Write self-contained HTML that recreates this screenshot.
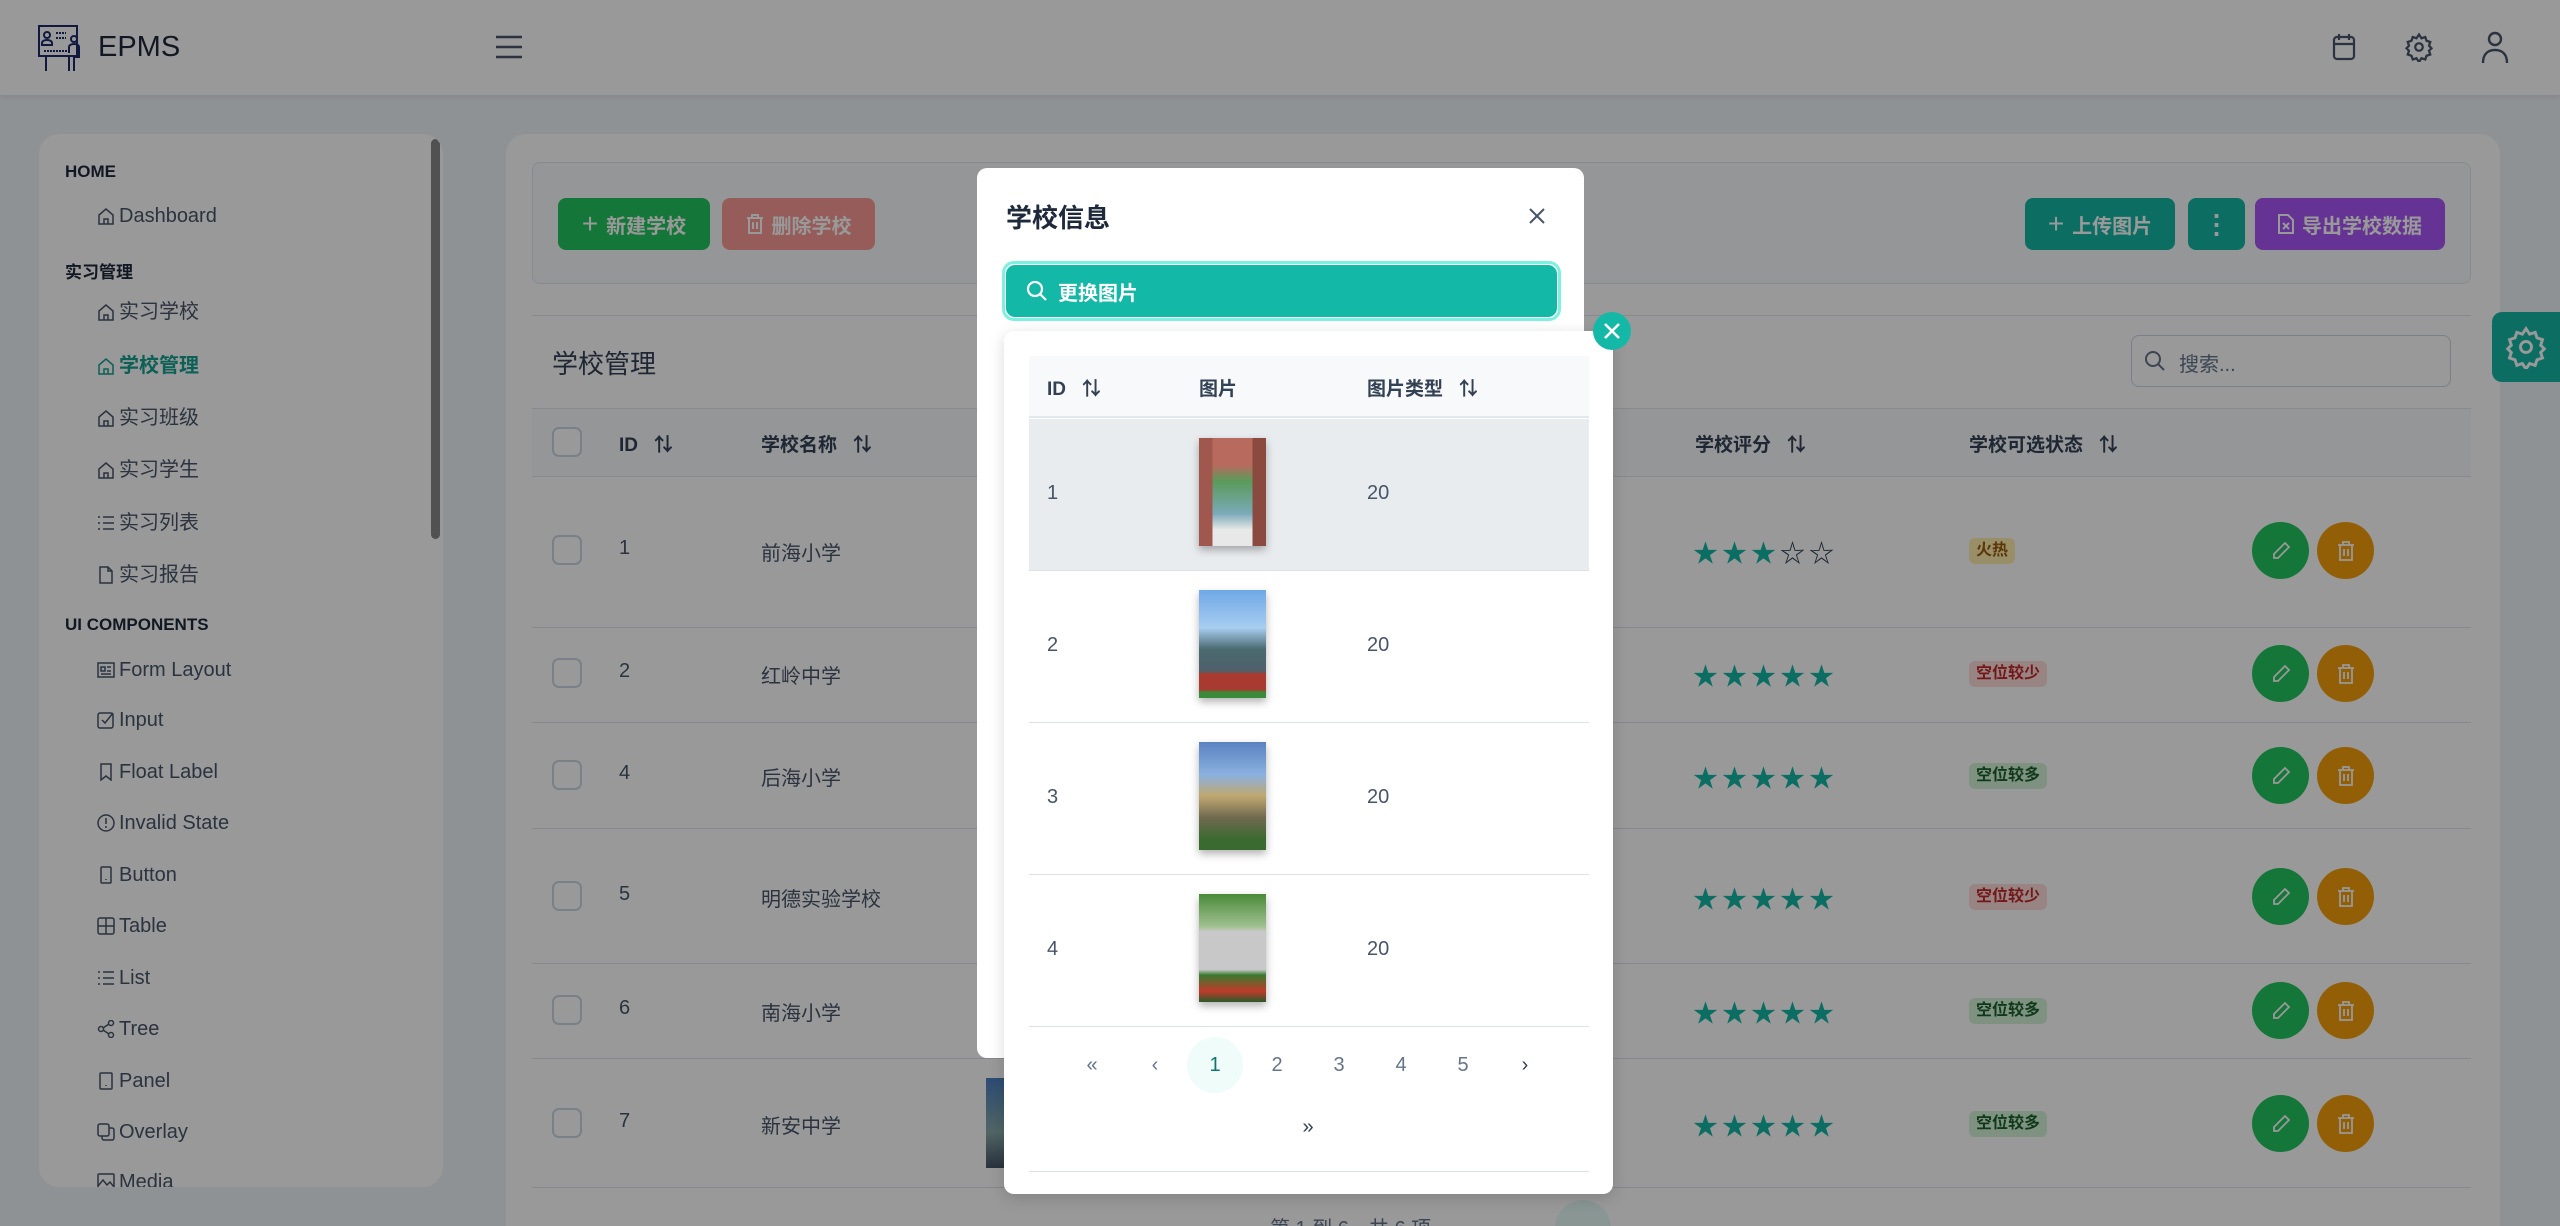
<!DOCTYPE html>
<html><head><meta charset="utf-8">
<style>
*{box-sizing:border-box;margin:0;padding:0}
html,body{width:2560px;height:1226px;overflow:hidden}
body{background:#eff3f8;font-family:"Liberation Sans","Noto Sans CJK SC",sans-serif;color:#334155;position:relative}
.a{position:absolute}
.hdr{left:0;top:0;width:2560px;height:95px;background:#fff;box-shadow:0 2px 6px rgba(0,0,0,.08)}
.side{left:39px;top:134px;width:404px;height:1053px;background:#fff;border-radius:20px;overflow:hidden}
.sec{font-size:17px;font-weight:bold;color:#1e293b;left:26px}
.it{font-size:20px;color:#475569;left:80px;line-height:24px}
.ic{left:-22px;top:3px;width:18px;height:18px}
.card{left:506px;top:134px;width:1994px;height:1092px;background:#fff;border-radius:20px 20px 0 0}
.btn{height:52px;border-radius:8px;color:#fff;font-size:20px;font-weight:bold;display:flex;align-items:center;justify-content:center;gap:8px}
.th{font-size:19px;font-weight:bold;color:#334155}
.td{font-size:20px;color:#475569}
.line{height:1px;background:#dee2e6}
.cb{width:30px;height:30px;border:2px solid #cbd5e1;border-radius:7px;background:#fff}
.tag{height:26px;padding:0 7px;border-radius:6px;font-size:16px;font-weight:bold;line-height:26px}
.rb{width:57px;height:57px;border-radius:50%;display:flex;align-items:center;justify-content:center}
.ov{left:0;top:0;width:2560px;height:1226px;background:rgba(0,0,0,.4);z-index:10}
.dlg{left:977px;top:168px;width:607px;height:890px;background:#fff;border-radius:10px;z-index:20}
.pop{left:1004px;top:331px;width:609px;height:863px;background:#fff;border-radius:10px;z-index:30;box-shadow:0 4px 16px rgba(0,0,0,.15)}
.img{width:67px;height:108px;box-shadow:0 4px 8px rgba(0,0,0,.3)}
.pg{font-size:20px;color:#64748b;width:56px;height:56px;line-height:56px;text-align:center;border-radius:50%}
.st{font-size:25px;color:#14b8a6;letter-spacing:4px;left:1693px}
</style></head><body>

<div class="a hdr">
  <svg class="a" style="left:36px;top:23px" width="50" height="50" viewBox="0 0 50 50" fill="none" stroke="#1e2a6b" stroke-width="2"><rect x="3" y="3" width="38" height="30"/><circle cx="11" cy="12" r="3"/><path d="M6 20c0-4 10-4 10 0v2H6z"/><path d="M20 10h10M20 15h10M8 28h24" stroke-dasharray="2 1"/><circle cx="38" cy="16" r="3"/><path d="M33 30v-6c0-4 10-4 10 0v10H38v14M33 32v16M10 33v15M38 33v15"/></svg>
  <div class="a" style="left:98px;top:31px;font-size:29px;color:#1e293b">EPMS</div>
  <svg class="a" style="left:494px;top:34px" width="30" height="26" viewBox="0 0 30 26" stroke="#475569" stroke-width="2.6"><path d="M2 3h26M2 13h26M2 23h26"/></svg>
  <svg class="a" style="left:2330px;top:32px" width="28" height="30" viewBox="0 0 28 30" fill="none" stroke="#475569" stroke-width="2.2"><rect x="4" y="5" width="20" height="22" rx="3"/><path d="M9 2v6M19 2v6M4 12h20"/></svg>
  <svg class="a" style="left:2404px;top:32px" width="30" height="30" viewBox="0 0 24 24" fill="none" stroke="#475569" stroke-width="1.8"><circle cx="12" cy="12" r="3"/><path d="M12 2l2 3 3-1 1 3 3 1-1 3 2 2-2 2 1 3-3 1-1 3-3-1-2 3-2-3-3 1-1-3-3-1 1-3-2-2 2-2-1-3 3-1 1-3 3 1z"/></svg>
  <svg class="a" style="left:2480px;top:30px" width="30" height="34" viewBox="0 0 30 34" fill="none" stroke="#475569" stroke-width="2.4"><circle cx="15" cy="9" r="6"/><path d="M3 33c0-9 5-13 12-13s12 4 12 13"/></svg>
</div>

<div class="a side">
  <div class="a" style="left:392px;top:5px;width:9px;height:400px;background:#888;border-radius:5px"></div>
  <div class="a sec" style="top:28px">HOME</div>
  <div class="a it" style="top:70px"><svg class="a ic" viewBox="0 0 18 18" fill="none" stroke="#475569" stroke-width="1.5"><path d="M2 8L9 2l7 6v9H2zM7 17v-5h4v5"/></svg>Dashboard</div>
  <div class="a sec" style="top:124px">实习管理</div>
  <div class="a it" style="top:166px"><svg class="a ic" viewBox="0 0 18 18" fill="none" stroke="#475569" stroke-width="1.5"><path d="M2 8L9 2l7 6v9H2zM7 17v-5h4v5"/></svg>实习学校</div>
  <div class="a it" style="top:220px;color:#14a08f;font-weight:bold"><svg class="a ic" viewBox="0 0 18 18" fill="none" stroke="#14a08f" stroke-width="1.5"><path d="M2 8L9 2l7 6v9H2zM7 17v-5h4v5"/></svg>学校管理</div>
  <div class="a it" style="top:272px"><svg class="a ic" viewBox="0 0 18 18" fill="none" stroke="#475569" stroke-width="1.5"><path d="M2 8L9 2l7 6v9H2zM7 17v-5h4v5"/></svg>实习班级</div>
  <div class="a it" style="top:324px"><svg class="a ic" viewBox="0 0 18 18" fill="none" stroke="#475569" stroke-width="1.5"><path d="M2 8L9 2l7 6v9H2zM7 17v-5h4v5"/></svg>实习学生</div>
  <div class="a it" style="top:377px"><svg class="a ic" viewBox="0 0 18 18" fill="none" stroke="#475569" stroke-width="1.5"><path d="M1 3h2M6 3h11M1 9h2M6 9h11M1 15h2M6 15h11"/></svg>实习列表</div>
  <div class="a it" style="top:429px"><svg class="a ic" viewBox="0 0 18 18" fill="none" stroke="#475569" stroke-width="1.5"><path d="M3 1h8l4 4v12H3zM11 1v4h4"/></svg>实习报告</div>
  <div class="a sec" style="top:481px">UI COMPONENTS</div>
  <div class="a it" style="top:524px"><svg class="a ic" viewBox="0 0 18 18" fill="none" stroke="#475569" stroke-width="1.5"><rect x="1" y="2" width="16" height="14"/><path d="M4 6h4v4H4zM10 6h4M10 10h4M4 13h10"/></svg>Form Layout</div>
  <div class="a it" style="top:574px"><svg class="a ic" viewBox="0 0 18 18" fill="none" stroke="#475569" stroke-width="1.5"><rect x="1" y="2" width="15" height="15" rx="2"/><path d="M5 9l3 3 8-10"/></svg>Input</div>
  <div class="a it" style="top:626px"><svg class="a ic" viewBox="0 0 18 18" fill="none" stroke="#475569" stroke-width="1.5"><path d="M4 1h10v16l-5-4-5 4z"/></svg>Float Label</div>
  <div class="a it" style="top:677px"><svg class="a ic" viewBox="0 0 18 18" fill="none" stroke="#475569" stroke-width="1.5"><circle cx="9" cy="9" r="8"/><path d="M9 4v6M9 12v2"/></svg>Invalid State</div>
  <div class="a it" style="top:729px"><svg class="a ic" viewBox="0 0 18 18" fill="none" stroke="#475569" stroke-width="1.5"><rect x="4" y="1" width="10" height="16" rx="1"/><path d="M9 13v1"/></svg>Button</div>
  <div class="a it" style="top:780px"><svg class="a ic" viewBox="0 0 18 18" fill="none" stroke="#475569" stroke-width="1.5"><rect x="1" y="1" width="16" height="16" rx="2"/><path d="M9 1v16M1 9h16"/></svg>Table</div>
  <div class="a it" style="top:832px"><svg class="a ic" viewBox="0 0 18 18" fill="none" stroke="#475569" stroke-width="1.5"><path d="M1 3h2M6 3h11M1 9h2M6 9h11M1 15h2M6 15h11"/></svg>List</div>
  <div class="a it" style="top:883px"><svg class="a ic" viewBox="0 0 18 18" fill="none" stroke="#475569" stroke-width="1.5"><circle cx="4" cy="9" r="2.5"/><circle cx="14" cy="3" r="2.5"/><circle cx="14" cy="15" r="2.5"/><path d="M6 8l6-4M6 10l6 4"/></svg>Tree</div>
  <div class="a it" style="top:935px"><svg class="a ic" viewBox="0 0 18 18" fill="none" stroke="#475569" stroke-width="1.5"><rect x="3" y="1" width="12" height="16" rx="1"/><path d="M9 13v1"/></svg>Panel</div>
  <div class="a it" style="top:986px"><svg class="a ic" viewBox="0 0 18 18" fill="none" stroke="#475569" stroke-width="1.5"><rect x="1" y="1" width="11" height="12" rx="2"/><path d="M5 13v2a2 2 0 002 2h8a2 2 0 002-2V7a2 2 0 00-2-2h-3"/></svg>Overlay</div>
  <div class="a it" style="top:1036px"><svg class="a ic" viewBox="0 0 18 18" fill="none" stroke="#475569" stroke-width="1.5"><rect x="1" y="1" width="16" height="16" rx="1"/><path d="M1 13l5-6 4 5 3-3 4 5"/></svg>Media</div>
</div>

<div class="a card"></div>
<div class="a" style="left:532px;top:162px;width:1939px;height:122px;border:1px solid #e2e8f0;border-radius:8px;background:#f8fafc"></div>
<div class="a btn" style="left:558px;top:198px;width:152px;background:#22c55e"><span style="font-size:28px;font-weight:normal">+</span>新建学校</div>
<div class="a btn" style="left:722px;top:198px;width:153px;background:#fb9a97">
<svg width="18" height="20" viewBox="0 0 18 20" fill="none" stroke="#fff" stroke-width="2"><path d="M1 4h16M6 4V1h6v3M3 4v15h12V4M7 8v7M11 8v7"/></svg>删除学校</div>
<div class="a btn" style="left:2025px;top:198px;width:150px;background:#14b8a6"><span style="font-size:28px;font-weight:normal">+</span>上传图片</div>
<div class="a btn" style="left:2188px;top:198px;width:57px;background:#14b8a6;font-size:26px">⋮</div>
<div class="a btn" style="left:2255px;top:198px;width:190px;background:#a855f7">
<svg width="16" height="20" viewBox="0 0 16 20" fill="none" stroke="#fff" stroke-width="2"><path d="M1 1h9l5 5v13H1zM5 9l6 6M11 9l-6 6"/></svg>导出学校数据</div>

<div class="a" style="left:532px;top:315px;width:1939px;height:1px;background:#e2e8f0"></div>
<div class="a" style="left:552px;top:344px;font-size:26px;color:#334155">学校管理</div>
<div class="a" style="left:2131px;top:335px;width:320px;height:52px;border:1px solid #cbd5e1;border-radius:8px;background:#fff"></div>
<svg class="a" style="left:2144px;top:350px" width="22" height="22" viewBox="0 0 22 22" fill="none" stroke="#64748b" stroke-width="2"><circle cx="9" cy="9" r="7"/><path d="M14 14l6 6"/></svg>
<div class="a" style="left:2179px;top:348px;font-size:20px;color:#64748b">搜索...</div>

<div class="a" style="left:532px;top:408px;width:1939px;height:69px;background:#f8fafc;border-top:1px solid #e2e8f0;border-bottom:1px solid #e2e8f0"></div>
<div class="a cb" style="left:552px;top:427px"></div>
<div class="a th" style="left:619px;top:430px">ID&nbsp;&nbsp; ⇅</div>
<div class="a th" style="left:761px;top:430px">学校名称&nbsp;&nbsp; ⇅</div>
<div class="a th" style="left:1695px;top:430px">学校评分&nbsp;&nbsp; ⇅</div>
<div class="a th" style="left:1969px;top:430px">学校可选状态&nbsp;&nbsp; ⇅</div>

<div class="a line" style="left:532px;top:627px;width:1939px"></div>
<div class="a line" style="left:532px;top:722px;width:1939px"></div>
<div class="a line" style="left:532px;top:828px;width:1939px"></div>
<div class="a line" style="left:532px;top:963px;width:1939px"></div>
<div class="a line" style="left:532px;top:1058px;width:1939px"></div>
<div class="a line" style="left:532px;top:1187px;width:1939px"></div>

<div class="a cb" style="left:552px;top:535px"></div><div class="a td" style="left:619px;top:537px">1</div><div class="a td" style="left:761px;top:537px">前海小学</div>
<div class="a cb" style="left:552px;top:658px"></div><div class="a td" style="left:619px;top:660px">2</div><div class="a td" style="left:761px;top:660px">红岭中学</div>
<div class="a cb" style="left:552px;top:760px"></div><div class="a td" style="left:619px;top:762px">4</div><div class="a td" style="left:761px;top:762px">后海小学</div>
<div class="a cb" style="left:552px;top:881px"></div><div class="a td" style="left:619px;top:883px">5</div><div class="a td" style="left:761px;top:883px">明德实验学校</div>
<div class="a cb" style="left:552px;top:995px"></div><div class="a td" style="left:619px;top:997px">6</div><div class="a td" style="left:761px;top:997px">南海小学</div>
<div class="a cb" style="left:552px;top:1108px"></div><div class="a td" style="left:619px;top:1110px">7</div><div class="a td" style="left:761px;top:1110px">新安中学</div>
<div class="a" style="left:986px;top:1078px;width:60px;height:90px;background:linear-gradient(#4a7fc0,#8aa 60%,#456)"></div>

<div class="a st" style="top:534px">★★★<span style="color:#334155">☆☆</span></div>
<div class="a st" style="top:657px">★★★★★</div>
<div class="a st" style="top:759px">★★★★★</div>
<div class="a st" style="top:880px">★★★★★</div>
<div class="a st" style="top:994px">★★★★★</div>
<div class="a st" style="top:1107px">★★★★★</div>

<div class="a tag" style="left:1969px;top:538px;background:#fdeeb0;color:#9a5a10">火热</div>
<div class="a tag" style="left:1969px;top:661px;background:#fdd;color:#c02828">空位较少</div>
<div class="a tag" style="left:1969px;top:763px;background:#d4f3d8;color:#1a5f2c">空位较多</div>
<div class="a tag" style="left:1969px;top:884px;background:#fdd;color:#c02828">空位较少</div>
<div class="a tag" style="left:1969px;top:998px;background:#d4f3d8;color:#1a5f2c">空位较多</div>
<div class="a tag" style="left:1969px;top:1111px;background:#d4f3d8;color:#1a5f2c">空位较多</div>

<div class="a rb" style="left:2252px;top:522px;background:#22c55e"><svg width="20" height="20" viewBox="0 0 20 20" fill="none" stroke="#fff" stroke-width="1.8"><path d="M14 2l4 4L7 17H3v-4z"/></svg></div>
<div class="a rb" style="left:2317px;top:522px;background:#f59e0b"><svg width="18" height="20" viewBox="0 0 18 20" fill="none" stroke="#fff" stroke-width="1.8"><path d="M1 4h16M6 4V1h6v3M3 4v15h12V4M7 8v7M11 8v7"/></svg></div>
<div class="a rb" style="left:2252px;top:645px;background:#22c55e"><svg width="20" height="20" viewBox="0 0 20 20" fill="none" stroke="#fff" stroke-width="1.8"><path d="M14 2l4 4L7 17H3v-4z"/></svg></div>
<div class="a rb" style="left:2317px;top:645px;background:#f59e0b"><svg width="18" height="20" viewBox="0 0 18 20" fill="none" stroke="#fff" stroke-width="1.8"><path d="M1 4h16M6 4V1h6v3M3 4v15h12V4M7 8v7M11 8v7"/></svg></div>
<div class="a rb" style="left:2252px;top:747px;background:#22c55e"><svg width="20" height="20" viewBox="0 0 20 20" fill="none" stroke="#fff" stroke-width="1.8"><path d="M14 2l4 4L7 17H3v-4z"/></svg></div>
<div class="a rb" style="left:2317px;top:747px;background:#f59e0b"><svg width="18" height="20" viewBox="0 0 18 20" fill="none" stroke="#fff" stroke-width="1.8"><path d="M1 4h16M6 4V1h6v3M3 4v15h12V4M7 8v7M11 8v7"/></svg></div>
<div class="a rb" style="left:2252px;top:868px;background:#22c55e"><svg width="20" height="20" viewBox="0 0 20 20" fill="none" stroke="#fff" stroke-width="1.8"><path d="M14 2l4 4L7 17H3v-4z"/></svg></div>
<div class="a rb" style="left:2317px;top:868px;background:#f59e0b"><svg width="18" height="20" viewBox="0 0 18 20" fill="none" stroke="#fff" stroke-width="1.8"><path d="M1 4h16M6 4V1h6v3M3 4v15h12V4M7 8v7M11 8v7"/></svg></div>
<div class="a rb" style="left:2252px;top:982px;background:#22c55e"><svg width="20" height="20" viewBox="0 0 20 20" fill="none" stroke="#fff" stroke-width="1.8"><path d="M14 2l4 4L7 17H3v-4z"/></svg></div>
<div class="a rb" style="left:2317px;top:982px;background:#f59e0b"><svg width="18" height="20" viewBox="0 0 18 20" fill="none" stroke="#fff" stroke-width="1.8"><path d="M1 4h16M6 4V1h6v3M3 4v15h12V4M7 8v7M11 8v7"/></svg></div>
<div class="a rb" style="left:2252px;top:1095px;background:#22c55e"><svg width="20" height="20" viewBox="0 0 20 20" fill="none" stroke="#fff" stroke-width="1.8"><path d="M14 2l4 4L7 17H3v-4z"/></svg></div>
<div class="a rb" style="left:2317px;top:1095px;background:#f59e0b"><svg width="18" height="20" viewBox="0 0 18 20" fill="none" stroke="#fff" stroke-width="1.8"><path d="M1 4h16M6 4V1h6v3M3 4v15h12V4M7 8v7M11 8v7"/></svg></div>

<div class="a" style="left:1270px;top:1212px;font-size:20px;color:#64748b">第 1 到 6，共 6 项</div>
<div class="a" style="left:1555px;top:1200px;width:56px;height:56px;border-radius:50%;background:#e6fbf7"></div>

<div class="a" style="left:2492px;top:312px;width:80px;height:70px;border-radius:10px 0 0 10px;background:#14b8a6;display:flex;align-items:center;padding-left:12px">
<svg width="44" height="44" viewBox="0 0 24 24" fill="none" stroke="#fff" stroke-width="1.6"><circle cx="12" cy="12" r="3"/><path d="M12 2l2 3 3-1 1 3 3 1-1 3 2 2-2 2 1 3-3 1-1 3-3-1-2 3-2-3-3 1-1-3-3-1 1-3-2-2 2-2-1-3 3-1 1-3 3 1z"/></svg></div>

<div class="a ov"></div>

<div class="a dlg">
  <div class="a" style="left:29px;top:30px;font-size:26px;font-weight:bold;color:#1e293b">学校信息</div>
  <svg class="a" style="left:550px;top:38px" width="20" height="20" viewBox="0 0 20 20" stroke="#475569" stroke-width="2"><path d="M3 3l14 14M17 3L3 17"/></svg>
  <div class="a" style="left:25px;top:93px;width:559px;height:60px;border:3px solid #7ef0e0;border-radius:12px"></div>
  <div class="a" style="left:29px;top:97px;width:551px;height:52px;background:#14b8a6;border-radius:9px;color:#fff;font-size:20px;font-weight:bold;display:flex;align-items:center;padding-left:20px;gap:10px">
  <svg width="22" height="22" viewBox="0 0 22 22" fill="none" stroke="#fff" stroke-width="2.2"><circle cx="9" cy="9" r="7"/><path d="M14 14l6 6"/></svg>更换图片</div>
</div>

<div class="a pop">
  <div class="a" style="left:25px;top:25px;width:560px;height:62px;background:#f8f9fa;border-bottom:2px solid #e2e8f0"></div>
  <div class="a th" style="left:43px;top:43px">ID&nbsp;&nbsp; ⇅</div>
  <div class="a th" style="left:195px;top:43px">图片</div>
  <div class="a th" style="left:363px;top:43px">图片类型&nbsp;&nbsp; ⇅</div>
  <div class="a" style="left:25px;top:88px;width:560px;height:151px;background:#e9ecef"></div>
  <div class="a line" style="left:25px;top:239px;width:560px"></div>
  <div class="a line" style="left:25px;top:391px;width:560px"></div>
  <div class="a line" style="left:25px;top:543px;width:560px"></div>
  <div class="a line" style="left:25px;top:695px;width:560px"></div>
  <div class="a line" style="left:25px;top:840px;width:560px"></div>
  <div class="a td" style="left:43px;top:151px">1</div><div class="a td" style="left:363px;top:151px">20</div>
  <div class="a td" style="left:43px;top:303px">2</div><div class="a td" style="left:363px;top:303px">20</div>
  <div class="a td" style="left:43px;top:455px">3</div><div class="a td" style="left:363px;top:455px">20</div>
  <div class="a td" style="left:43px;top:607px">4</div><div class="a td" style="left:363px;top:607px">20</div>
  <div class="a img" style="left:195px;top:107px;background:linear-gradient(90deg,#a0584e 0 20%,transparent 20% 80%,#8a4a40 80%),linear-gradient(#b86a5e 0 25%,#5a9a5a 40%,#7aaab8 70%,#e8e8e8 85%)"></div>
  <div class="a img" style="left:195px;top:259px;background:linear-gradient(#6fa8e8,#a8cdf0 35%,#4a6a70 55%,#50606a 75%,#a83a30 78% 92%,#3a8a3a 95%)"></div>
  <div class="a img" style="left:195px;top:411px;background:linear-gradient(#5a82c0,#8ab0e0 30%,#c0a870 50%,#706a50 70%,#3a6a30 90%)"></div>
  <div class="a img" style="left:195px;top:563px;background:linear-gradient(#4a8a3a,#a0c090 30%,#c8c8c8 35% 70%,#3a7a30 75%,#c03a2a 90%,#2a5a2a)"></div>
  <div class="a pg" style="left:60px;top:706px">«</div>
  <div class="a pg" style="left:123px;top:706px">‹</div>
  <div class="a pg" style="left:183px;top:706px;background:#effcf9;color:#0f766e">1</div>
  <div class="a pg" style="left:245px;top:706px">2</div>
  <div class="a pg" style="left:307px;top:706px">3</div>
  <div class="a pg" style="left:369px;top:706px">4</div>
  <div class="a pg" style="left:431px;top:706px">5</div>
  <div class="a pg" style="left:493px;top:706px;color:#334155">›</div>
  <div class="a pg" style="left:276px;top:768px;color:#334155">»</div>
</div>
<div class="a" style="left:1593px;top:312px;width:38px;height:38px;border-radius:50%;background:#14b8a6;z-index:40;display:flex;align-items:center;justify-content:center">
<svg width="18" height="18" viewBox="0 0 18 18" stroke="#fff" stroke-width="2.6"><path d="M2 2l14 14M16 2L2 16"/></svg></div>
</body></html>
